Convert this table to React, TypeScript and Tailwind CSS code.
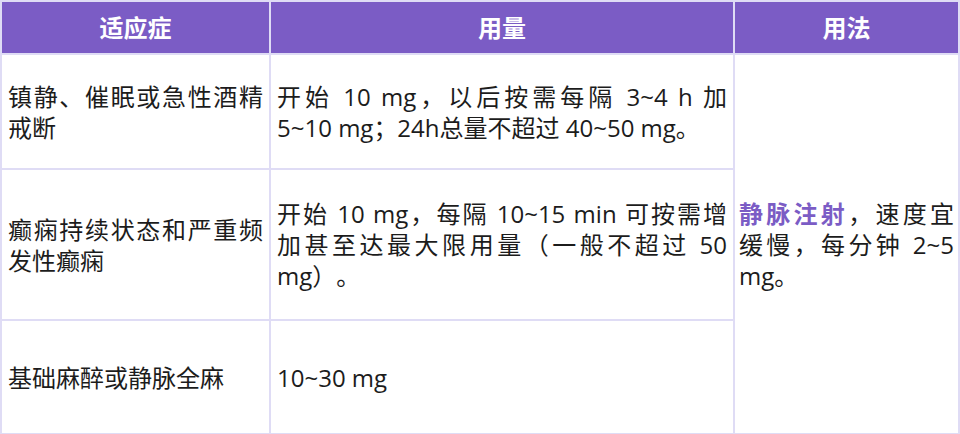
import React from "react";

const rows = [
  {
    indication: "镇静、催眠或急性酒精戒断",
    dose: ["开始 10 mg，以后按需每隔 3~4 h 加", "5~10 mg；24h总量不超过 40~50 mg。"],
    height: "h-[115px]",
  },
  {
    indication: "癫痫持续状态和严重频发性癫痫",
    dose: ["开始 10 mg，每隔 10~15 min 可按需增", "加甚至达最大限用量（一般不超过 50", "mg）。"],
    height: "h-[151px]",
  },
  {
    indication: "基础麻醉或静脉全麻",
    dose: ["10~30 mg"],
    height: "h-[114px]",
  },
];

export default function App() {
  return (
    <div
      className="w-[960px] h-[434px] bg-white text-[#1c1c1c] [text-spacing-trim:space-all]"
      style={{ fontFamily: '"Open Sans", "Noto Sans CJK SC", sans-serif' }}
    >
      <table className="w-full table-fixed border-collapse border-2 border-[#dfdcf5] text-[24px] leading-[31px]">
        <colgroup>
          <col className="w-[269px]" />
          <col className="w-[464px]" />
          <col />
        </colgroup>
        <thead>
          <tr className="h-[53px] bg-[#7b5cc5] text-white font-bold">
            <th className="border-2 border-[#dfdcf5] text-center">适应症</th>
            <th className="border-2 border-[#dfdcf5] text-center">用量</th>
            <th className="border-2 border-[#dfdcf5] text-center">用法</th>
          </tr>
        </thead>
        <tbody>
          {rows.map((row, i) => (
            <tr key={i} className={row.height}>
              <td className="border-2 border-[#dfdcf5] px-1.5 align-middle text-justify">{row.indication}</td>
              <td className="border-2 border-[#dfdcf5] px-1.5 align-middle">
                {row.dose.map((line, j) => (
                  <div
                    key={j}
                    className={
                      j < row.dose.length - 1
                        ? "whitespace-nowrap text-justify [text-align-last:justify]"
                        : "whitespace-nowrap"
                    }
                  >
                    {line}
                  </div>
                ))}
              </td>
              {i === 0 && (
                <td rowSpan={3} className="border-2 border-[#dfdcf5] px-1 align-middle text-justify">
                  <span className="font-bold text-[#7b5cc5]">静脉注射</span>，速度宜缓慢，每分钟 2~5 mg。
                </td>
              )}
            </tr>
          ))}
        </tbody>
      </table>
    </div>
  );
}
